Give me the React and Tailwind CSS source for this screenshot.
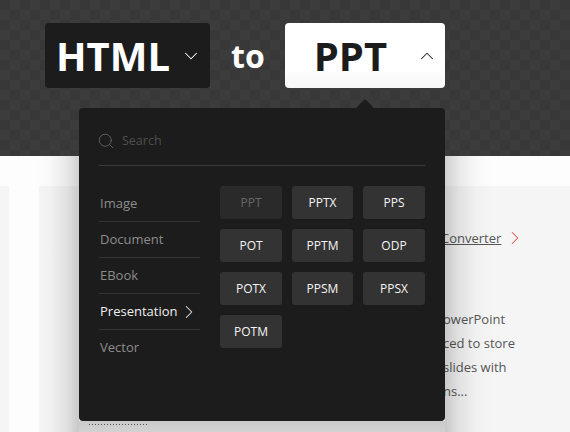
import { ChevronDown, ChevronRight, ChevronUp, Search } from "lucide-react";

const categories = ["Image", "Document", "EBook", "Presentation", "Vector"];
const formats = ["PPT", "PPTX", "PPS", "POT", "PPTM", "ODP", "POTX", "PPSM", "PPSX", "POTM"];

function FormatButton({ name }) {
  const off = name === "PPT";
  return (
    <button className={`h-[33px] rounded-[3px] text-[12px] ${off ? "bg-[#2a2a2a] text-[#666] font-normal" : "bg-[#333] text-[#f5f5f5] font-medium"}`}>
      {name}
    </button>
  );
}

function Dropdown() {
  return (
    <div className="absolute left-[79px] top-[108px] h-[313px] w-[366px] rounded-[4px] bg-[#1c1c1c] px-5 pt-5">
      <div className="absolute -top-[9px] left-[276px] h-0 w-0 border-x-[10px] border-b-[10px] border-x-transparent border-b-[#1c1c1c]" />
      <div className="flex h-[38px] items-center gap-[7px] border-b border-[#3a3a3a] pb-[11px]">
        <Search size={18} strokeWidth={1.1} className="-ml-[2px] text-[#6a6a6a]" />
        <span className="text-[12.5px] text-[#4e4e4e]">Search</span>
      </div>
      <div className="mt-5 flex gap-5">
        <ul className="w-[101px]">
          {categories.map((c, i) => (
            <li
              key={c}
              className={`flex h-[36px] items-center justify-between border-[#333] pl-px text-[13px] ${i < 4 ? "border-b" : ""} ${c === "Presentation" ? "text-[#eee]" : "text-[#8c8c8c]"}`}
            >
              {c}
              {c === "Presentation" && <ChevronRight size={22} strokeWidth={1.1} />}
            </li>
          ))}
        </ul>
        <div className="grid w-[205px] grid-cols-[62px_61px_62px] content-start gap-x-[10px] gap-y-[10px]">
          {formats.map((f) => (
            <FormatButton key={f} name={f} />
          ))}
        </div>
      </div>
    </div>
  );
}

export default function App() {
  return (
    <div className="relative h-[432px] w-[570px] overflow-hidden bg-[#fdfdfd] font-['Open_Sans',sans-serif]">
      <div className="flex h-[246px] translate-y-[186px] bg-[#f5f5f5]">
        <div className="ml-[9px] w-[30px] shrink-0 bg-[#fdfdfd]" />
        <div className="flex-1 pl-[404px] pt-[40px] text-[13px] leading-[24px] text-[#555]">
          <div className="flex items-center gap-[3px]">
            <span className="-ml-[2px] underline">Converter</span>
            <ChevronRight size={22} strokeWidth={1.1} className="text-[#f04a50]" />
          </div>
          <p className="mt-[57px] whitespace-nowrap">owerPoint</p>
          <p className="whitespace-nowrap">ced to store</p>
          <p className="whitespace-nowrap">slides with</p>
          <p className="whitespace-nowrap">ns...</p>
        </div>
      </div>
      {/* panel shadow as gradient strips, it only falls on the page below the header */}
      <div className="absolute bottom-0 left-[35px] top-[156px] w-[44px] bg-[linear-gradient(to_right,transparent,rgba(0,0,0,0.02)_35%,rgba(0,0,0,0.08)_70%,rgba(0,0,0,0.18))]" />
      <div className="absolute bottom-0 left-[445px] top-[156px] w-[48px] bg-[linear-gradient(to_left,transparent,rgba(0,0,0,0.02)_35%,rgba(0,0,0,0.08)_70%,rgba(0,0,0,0.18))]" />
      <div className="absolute bottom-0 left-[79px] top-[421px] w-[366px] bg-[linear-gradient(to_bottom,rgba(0,0,0,0.18),rgba(0,0,0,0.14))]" />
      <div className="absolute left-[89px] top-[424px] h-px w-[58px] bg-[repeating-linear-gradient(90deg,#555_0_1px,transparent_1px_3px)]" />
      <div className="absolute inset-x-0 top-0 flex h-[156px] items-start gap-[21px] bg-[#3a3a3a] bg-[conic-gradient(#3c3c3c_25%,#383838_0_50%,#3c3c3c_0_75%,#383838_0)] bg-[length:20px_20px] pl-[45px] pt-[23px]">
        <div className="flex h-[65px] w-[165px] items-center justify-between rounded-[4px] bg-[#1c1c1c] pl-[11px] pr-[8px]">
          <span className="text-[40px] font-bold text-white">HTML</span>
          <ChevronDown size={22} strokeWidth={1.1} className="text-white" />
        </div>
        <span className="mt-[9px] text-[32px] font-bold text-white">to</span>
        <div className="-ml-px flex h-[65px] w-[160px] items-center justify-between rounded-[4px] bg-white bg-gradient-to-b from-white from-70% to-[#f6f6f6] pl-[29px] pr-[7px]">
          <span className="text-[40px] font-bold text-[#1c1c1c]">PPT</span>
          <ChevronUp size={22} strokeWidth={1.1} className="text-[#1c1c1c]" />
        </div>
      </div>
      <Dropdown />
    </div>
  );
}
